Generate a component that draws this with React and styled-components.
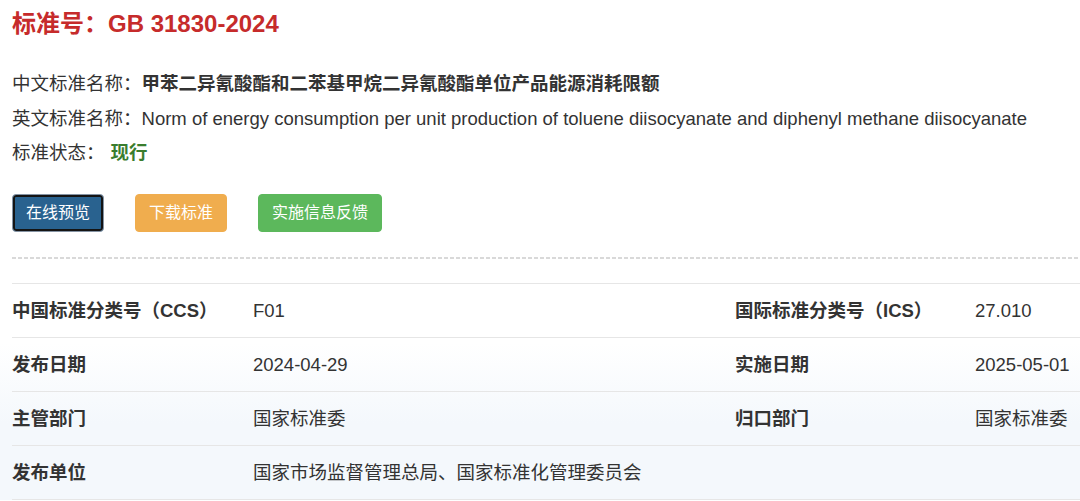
import React from "react";
import styled, { createGlobalStyle } from "styled-components";

const GlobalStyle = createGlobalStyle`
  body {
    margin: 0;
    background: #fff;
    font-family: "Liberation Sans", Arial, "Noto Sans CJK SC", sans-serif;
    color: #333;
  }
`;

const Page = styled.div`
  width: 1080px;
  height: 501px;
  overflow: hidden;
`;

const Head = styled.div`
  padding: 8px 0 0 12px;
`;

const Title = styled.h1`
  margin: 0;
  font-size: 24px;
  line-height: 32px;
  font-weight: 700;
  color: #c62b2b;
`;

const InfoList = styled.div`
  margin-top: 27px;
  display: flex;
  flex-direction: column;
`;

const InfoLine = styled.div`
  font-size: 18.5px;
  line-height: 34.5px;
  color: #333;
  white-space: nowrap;
`;

const InfoValue = styled.span`
  font-weight: ${(p) => (p.$bold ? 700 : 400)};
  color: ${(p) => p.$color || "#333"};
  margin-left: ${(p) => p.$gap || 0}px;
`;

const Actions = styled.div`
  display: flex;
  gap: 31px;
  margin-top: 23px;
`;

const Button = styled.button`
  height: 38px;
  padding: 0 13px;
  border: 1px solid ${(p) => p.$bg};
  border-radius: 4px;
  background: ${(p) => p.$bg};
  color: #fff;
  font-family: inherit;
  font-size: 16px;
  line-height: 20px;
  cursor: pointer;
  ${(p) =>
    p.$focused &&
    `
    border-color: #8593a3;
    box-shadow: inset 0 0 0 2px #141414;
  `}
`;

const Divider = styled.div`
  height: 2px;
  margin: 25px 0 0 12px;
  background: repeating-linear-gradient(
    to right,
    #d9d9d9 0 4px,
    transparent 4px 6px
  );
`;

const TableWrap = styled.div`
  margin-top: 24px;
  padding-left: 12px;
  background: linear-gradient(
    to bottom,
    #ffffff 0,
    #ffffff 60px,
    #f4f8fc 140px,
    #f4f8fc 100%
  );
`;

const Table = styled.div`
  display: grid;
  grid-template-columns: 241px 482px 240px 1fr;
  border-top: 1px solid #e6e6e6;
`;

const Cell = styled.div`
  height: 53px;
  line-height: 53px;
  border-bottom: 1px solid #e6e6e6;
  font-size: 18.5px;
  font-weight: ${(p) => (p.$label ? 700 : 400)};
  color: #333;
  white-space: nowrap;
  grid-column: ${(p) => (p.$span ? `span ${p.$span}` : "auto")};
`;

const rows = [
  ["中国标准分类号（CCS）", "F01", "国际标准分类号（ICS）", "27.010"],
  ["发布日期", "2024-04-29", "实施日期", "2025-05-01"],
  ["主管部门", "国家标准委", "归口部门", "国家标准委"],
];

export default function App() {
  return (
    <Page>
      <GlobalStyle />
      <Head>
        <Title>标准号：GB 31830-2024</Title>
        <InfoList>
          <InfoLine>
            中文标准名称：
            <InfoValue $bold>
              甲苯二异氰酸酯和二苯基甲烷二异氰酸酯单位产品能源消耗限额
            </InfoValue>
          </InfoLine>
          <InfoLine>
            英文标准名称：
            <InfoValue>
              Norm of energy consumption per unit production of toluene
              diisocyanate and diphenyl methane diisocyanate
            </InfoValue>
          </InfoLine>
          <InfoLine>
            标准状态：
            <InfoValue $bold $color="#3a7d2e" $gap={6}>
              现行
            </InfoValue>
          </InfoLine>
        </InfoList>
        <Actions>
          <Button $bg="#29628f" $focused>
            在线预览
          </Button>
          <Button $bg="#f0ad4e">下载标准</Button>
          <Button $bg="#5cb85c">实施信息反馈</Button>
        </Actions>
      </Head>
      <Divider />
      <TableWrap>
        <Table>
          {rows.map((r) =>
            r.map((text, i) => (
              <Cell key={text + i} $label={i % 2 === 0}>
                {text}
              </Cell>
            ))
          )}
          <Cell $label>发布单位</Cell>
          <Cell $span={3}>国家市场监督管理总局、国家标准化管理委员会</Cell>
        </Table>
      </TableWrap>
    </Page>
  );
}
